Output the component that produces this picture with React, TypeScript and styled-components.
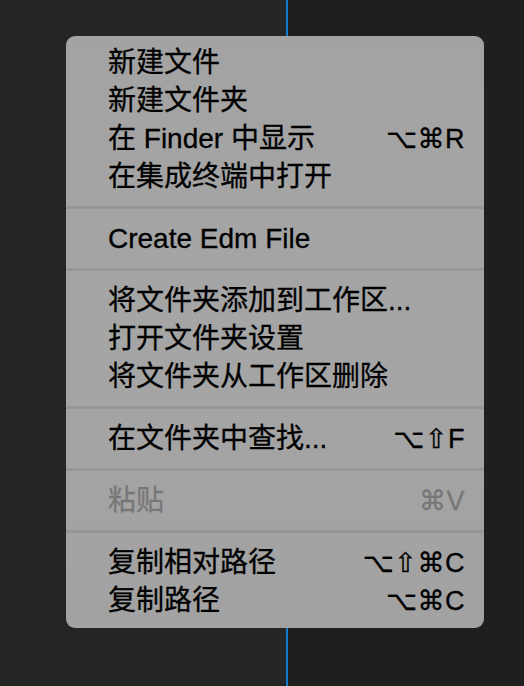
import React from 'react';
import styled, { createGlobalStyle } from 'styled-components';

const GlobalStyle = createGlobalStyle`
  html, body {
    margin: 0;
    padding: 0;
    width: 524px;
    height: 686px;
    overflow: hidden;
    background: #1e1e1e;
  }
`;

const Screen = styled.div`
  position: relative;
  display: flex;
  width: 524px;
  height: 686px;
`;

const SidePane = styled.div`
  width: 286px;
  background: #252526;
`;

const Sash = styled.div`
  width: 2px;
  background: #0e7bd2;
`;

const EditorPane = styled.div`
  flex: 1;
  background: #1f1f1f;
`;

const Menu = styled.div`
  position: absolute;
  left: 66px;
  top: 36px;
  width: 418px;
  box-sizing: border-box;
  padding: 7px 0 9px;
  border-radius: 9px;
  background: linear-gradient(180deg, #a3a3a3 0%, #a5a5a5 50%, #a2a2a2 100%);
  display: flex;
  flex-direction: column;
`;

const Item = styled.div<{ $disabled?: boolean }>`
  height: 38px;
  box-sizing: border-box;
  padding: 2px 19px 0 42px;
  display: flex;
  align-items: center;
  justify-content: space-between;
  color: ${p => (p.$disabled ? '#777777' : '#000000')};
`;

const Label = styled.span`
  font-family: "Liberation Sans", "Noto Sans CJK SC", sans-serif;
  font-size: 28px;
  line-height: 36px;
  white-space: nowrap;
  -webkit-text-stroke: 0.3px currentColor;
`;

const Keys = styled.span`
  font-family: "Liberation Sans", "DejaVu Sans", sans-serif;
  font-size: 27px;
  line-height: 36px;
  letter-spacing: 0.5px;
  white-space: nowrap;
  -webkit-text-stroke: 0.3px currentColor;
`;

const Separator = styled.div`
  height: 3px;
  margin: 11px 0 10px;
  background: #979797;
`;

type Entry = { label: string; keys?: string; disabled?: boolean } | 'sep';

const entries: Entry[] = [
  { label: '新建文件' },
  { label: '新建文件夹' },
  { label: '在 Finder 中显示', keys: '⌥⌘R' },
  { label: '在集成终端中打开' },
  'sep',
  { label: 'Create Edm File' },
  'sep',
  { label: '将文件夹添加到工作区...' },
  { label: '打开文件夹设置' },
  { label: '将文件夹从工作区删除' },
  'sep',
  { label: '在文件夹中查找...', keys: '⌥⇧F' },
  'sep',
  { label: '粘贴', keys: '⌘V', disabled: true },
  'sep',
  { label: '复制相对路径', keys: '⌥⇧⌘C' },
  { label: '复制路径', keys: '⌥⌘C' },
];

export default function App() {
  return (
    <>
      <GlobalStyle />
      <Screen>
        <SidePane />
        <Sash />
        <EditorPane />
        <Menu>
          {entries.map((e, i) =>
            e === 'sep' ? (
              <Separator key={i} />
            ) : (
              <Item key={i} $disabled={e.disabled}>
                <Label>{e.label}</Label>
                {e.keys && <Keys>{e.keys}</Keys>}
              </Item>
            )
          )}
        </Menu>
      </Screen>
    </>
  );
}
